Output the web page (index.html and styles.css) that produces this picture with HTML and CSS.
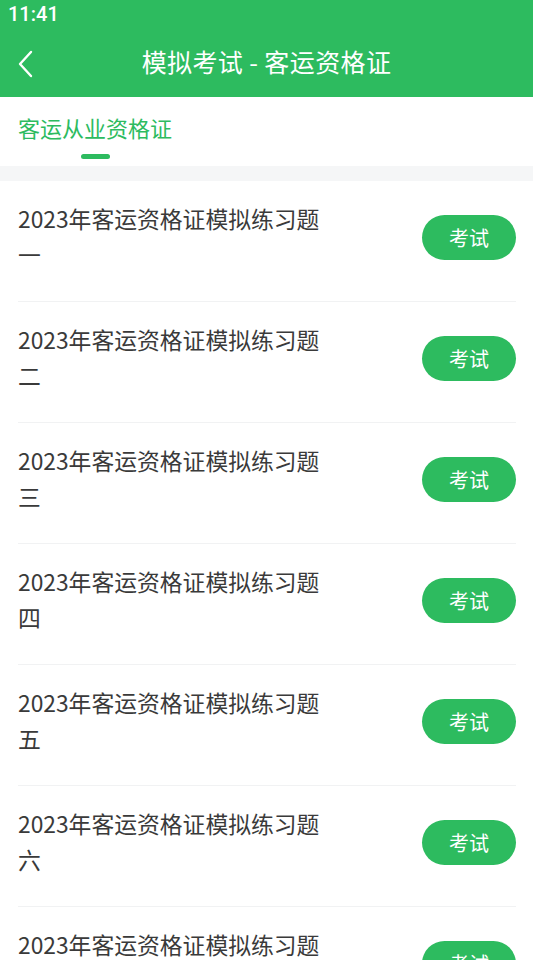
FILE: index.html
```html
<!DOCTYPE html>
<html lang="zh">
<head>
<meta charset="utf-8">
<link rel="stylesheet" href="styles.css">
</head>
<body>
<div class="app">
  <div class="topbar">
    <div class="status">11:41</div>
    <div class="nav">
      <svg class="back" width="20" height="30" viewBox="0 0 20 30"><path d="M15 3 L4 15 L15 27" fill="none" stroke="#fff" stroke-width="2.4" stroke-linecap="round" stroke-linejoin="round"/></svg>
      <div class="title">模拟考试 - 客运资格证</div>
    </div>
  </div>
  <div class="tabs">
    <div class="tab">客运从业资格证<span class="ind"></span></div>
  </div>
  <div class="gap"></div>
  <ul class="list">
    <li class="item"><div class="name">2023年客运资格证模拟练习题一</div><button class="btn">考试</button></li>
    <li class="item"><div class="name">2023年客运资格证模拟练习题二</div><button class="btn">考试</button></li>
    <li class="item"><div class="name">2023年客运资格证模拟练习题三</div><button class="btn">考试</button></li>
    <li class="item"><div class="name">2023年客运资格证模拟练习题四</div><button class="btn">考试</button></li>
    <li class="item"><div class="name">2023年客运资格证模拟练习题五</div><button class="btn">考试</button></li>
    <li class="item"><div class="name">2023年客运资格证模拟练习题六</div><button class="btn">考试</button></li>
    <li class="item"><div class="name">2023年客运资格证模拟练习题七</div><button class="btn">考试</button></li>
  </ul>
</div>
</body>
</html>
```
FILE: styles.css
```css
* { box-sizing: border-box; }
html, body { margin: 0; padding: 0; background: #fff; }
body {
  width: 533px; height: 960px; overflow: hidden;
  font-family: "Noto Sans CJK SC", "Noto Sans", sans-serif;
}
.app { width: 533px; }
.topbar { background: #2dbb5f; color: #fff; height: 97px; }
.status {
  font-family: Roboto, "Noto Sans", sans-serif; font-weight: 500;
  font-size: 20px; line-height: 28px; padding-left: 8px; height: 28px;
}
.nav { position: relative; height: 69px; display: flex; align-items: center; justify-content: center; }
.back { position: absolute; left: 16px; top: 21px; }
.title { font-size: 25px; line-height: 32px; margin-top: -4px; letter-spacing: 0.4px; }
.tabs { height: 69px; padding-left: 18px; }
.tab {
  position: relative; display: inline-block; color: #2dbb5f;
  font-size: 22px; line-height: 32px; padding-top: 14px;
}
.ind {
  position: absolute; left: 63px; top: 57px; width: 29px; height: 5px;
  border-radius: 3px; background: #2dbb5f;
}
.gap { height: 15px; background: #f5f6f7; }
.list { list-style: none; margin: 0; padding: 0 17px 0 18px; }
.item {
  display: flex; align-items: center; justify-content: space-between;
  padding: 20px 0 28px; border-bottom: 1px solid #f1f2f3;
}
.name { width: 310px; font-size: 22.8px; line-height: 36px; color: #3a3a3a; }
.btn {
  width: 94px; height: 45px; border: none; border-radius: 23px;
  background: #2dbb5f; color: #fff; font-family: inherit; font-size: 20px;
  padding: 0; margin-top: 0;
}
```
